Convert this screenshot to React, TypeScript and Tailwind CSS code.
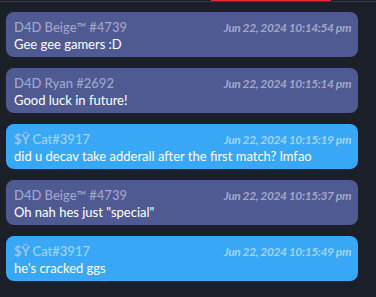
const messages = [
  { name: "D4D Beige™ #4739", time: "Jun 22, 2024 10:14:54 pm", text: "Gee gee gamers :D", mine: false },
  { name: "D4D Ryan #2692", time: "Jun 22, 2024 10:15:14 pm", text: "Good luck in future!", mine: false },
  { name: "$Ÿ Cat#3917", time: "Jun 22, 2024 10:15:19 pm", text: "did u decav take adderall after the first match? lmfao", mine: true },
  { name: "D4D Beige™ #4739", time: "Jun 22, 2024 10:15:37 pm", text: 'Oh nah hes just "special"', mine: false },
  { name: "$Ÿ Cat#3917", time: "Jun 22, 2024 10:15:49 pm", text: "he's cracked ggs", mine: true },
];

export default function App() {
  return (
    <div className="w-[376px] h-[297px] bg-[#1b2028] overflow-hidden font-['Lato',sans-serif]">
      {/* top border with active tab marker */}
      <div className="relative h-[2px] border-b border-[#343a47]">
        <div className="absolute left-[211px] top-0 h-px w-[120px] bg-[#e8273b]"></div>
      </div>

      <div className="flex flex-col gap-[11px] pl-[6px] pr-[18px] pt-[10px]">
        {messages.map((m, i) => (
          <div
            key={i}
            className={
              m.mine
                ? "h-[45px] rounded-lg bg-[#38a7f6] pl-2 pr-[7px] pt-[7px]"
                : "h-[45px] rounded-lg bg-[#4f5a92] pl-2 pr-[7px] pt-[7px]"
            }
          >
            <div className="flex items-baseline justify-between text-[13px] leading-[16px]">
              <span className={m.mine ? "font-medium text-[#a3d3f9]" : "font-medium text-[#a1a6c8]"}>{m.name}</span>
              <span
                className={
                  m.mine
                    ? "text-[12px] tracking-[-0.4px] italic font-bold text-[#a3d3f9]"
                    : "text-[12px] tracking-[-0.4px] italic font-bold text-[#a1a6c8]"
                }
              >
                {m.time}
              </span>
            </div>
            <div className="text-[13px] leading-[16px] text-white">{m.text}</div>
          </div>
        ))}
      </div>
    </div>
  );
}
